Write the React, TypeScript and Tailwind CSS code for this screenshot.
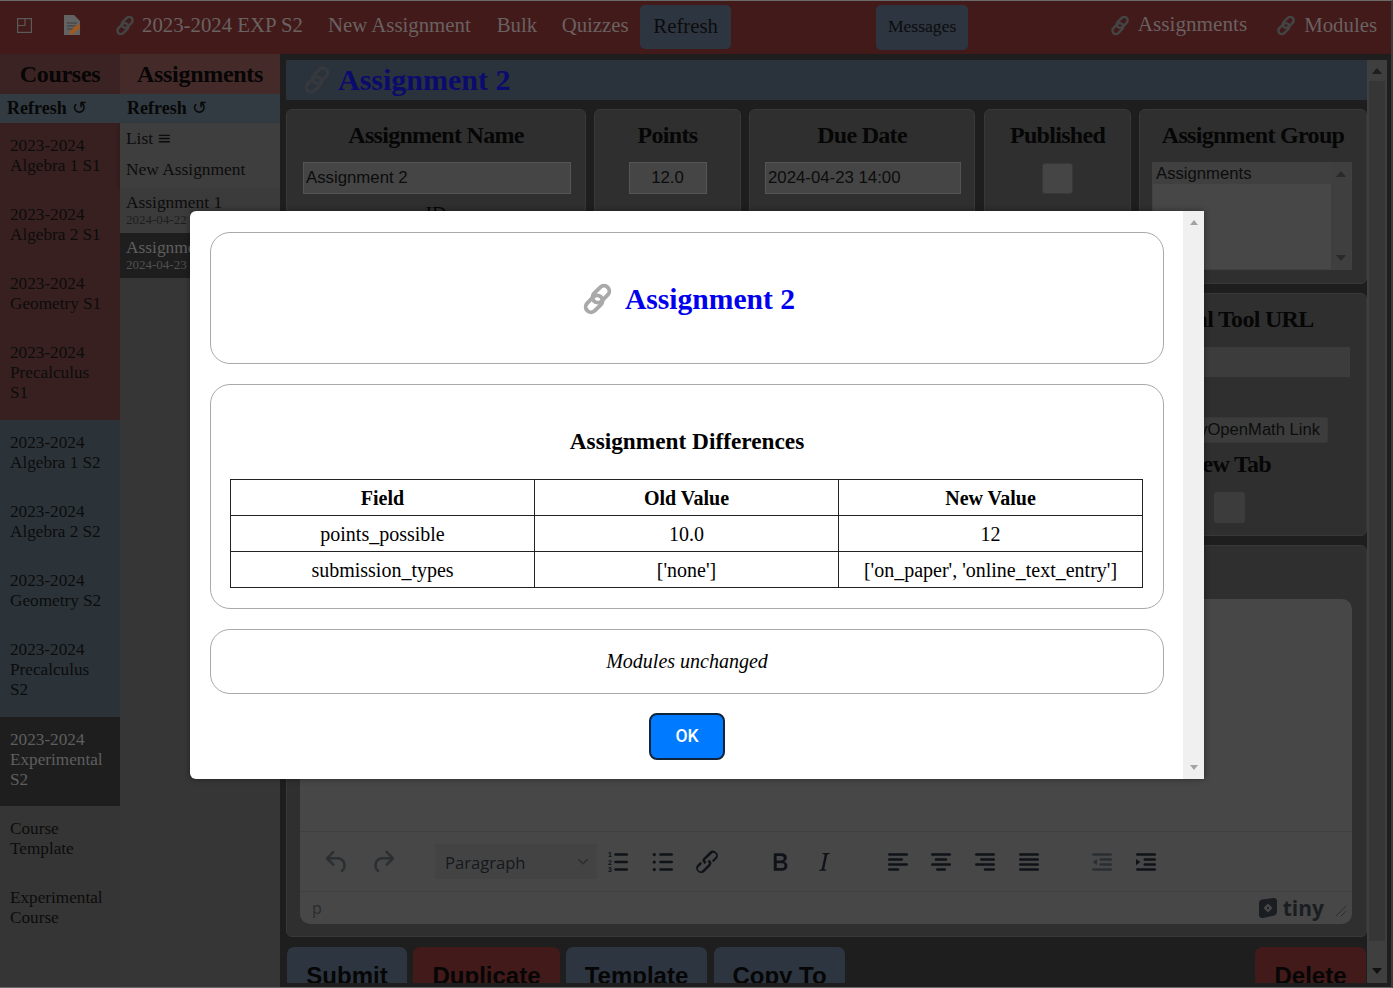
import React from "react";

type Course = { lines: string[]; tone: "red" | "blue" | "active" | "plain" };

const courses: Course[] = [
  { lines: ["2023-2024", "Algebra 1 S1"], tone: "red" },
  { lines: ["2023-2024", "Algebra 2 S1"], tone: "red" },
  { lines: ["2023-2024", "Geometry S1"], tone: "red" },
  { lines: ["2023-2024", "Precalculus", "S1"], tone: "red" },
  { lines: ["2023-2024", "Algebra 1 S2"], tone: "blue" },
  { lines: ["2023-2024", "Algebra 2 S2"], tone: "blue" },
  { lines: ["2023-2024", "Geometry S2"], tone: "blue" },
  { lines: ["2023-2024", "Precalculus", "S2"], tone: "blue" },
  { lines: ["2023-2024", "Experimental", "S2"], tone: "active" },
  { lines: ["Course", "Template"], tone: "plain" },
  { lines: ["Experimental", "Course"], tone: "plain" },
];

const toneClass = {
  red: "bg-[#382020] text-[#0c0c0c]",
  blue: "bg-[#2b3339] text-[#0c0c0c]",
  active: "bg-[#1e1e1e] text-[#5e5e5e]",
  plain: "bg-[#353535] text-[#0c0c0c]",
};

const ink = "h-[30px] w-[30px] shrink-0 text-[#0f1318]";
const faded = "h-[30px] w-[30px] shrink-0 text-[#2b2f32]";

function ChainIcon({ className }: { className?: string }) {
  return (
    <svg viewBox="0 0 32 32" fill="none" stroke="currentColor" strokeWidth="4" className={className}>
      <rect x="14" y="1" width="11" height="20" rx="5.5" transform="rotate(45 19.5 11)" />
      <rect x="7" y="11" width="11" height="20" rx="5.5" transform="rotate(45 12.5 21)" />
    </svg>
  );
}

function Lines({ rows, className }: { rows: [number, number][]; className: string }) {
  return (
    <svg viewBox="0 0 24 24" fill="currentColor" className={className}>
      {rows.map(([x, w], i) => (
        <rect key={i} x={x} y={5 + i * 4} width={w} height="2" rx="1" />
      ))}
    </svg>
  );
}

function IconPath({ d, className }: { d: string; className: string }) {
  return (
    <svg viewBox="0 0 24 24" fill="currentColor" className={className}>
      <path d={d} />
    </svg>
  );
}

function Arrow({ down, className }: { down?: boolean; className: string }) {
  return (
    <svg viewBox="0 0 10 6" fill="currentColor" className={className}>
      <path d={down ? "M0 0h10L5 6z" : "M5 0l5 6H0z"} />
    </svg>
  );
}

function CardTitle({ children }: { children: React.ReactNode }) {
  return (
    <h2 className="text-center text-[24px] font-bold leading-[28px] tracking-[-0.7px] text-[#060606]">{children}</h2>
  );
}

function Card({ className, children }: { className: string; children?: React.ReactNode }) {
  return <div className={`rounded-[6px] border border-[#383838] bg-[#2f2f2f] ${className}`}>{children}</div>;
}

function FormInput({ className, children }: { className: string; children?: React.ReactNode }) {
  return (
    <div
      className={`flex h-[32px] items-center border border-[#555555] bg-[#454545] px-[2px] text-[16.8px] text-[#0c0c0c] [font-family:'Liberation_Sans',sans-serif] ${className}`}
    >
      {children}
    </div>
  );
}

function Header() {
  return (
    <header className="flex h-[53px] shrink-0 items-center bg-[#421a1a] pb-[5px] pr-[14px] text-[20.8px] text-[#6a6161]">
      <svg viewBox="0 0 15 15" fill="none" stroke="#5a5a5a" strokeWidth="1.2" className="ml-[17px] h-[15px] w-[15px]">
        <rect x="0.6" y="0.6" width="13.8" height="13.8" />
        <path d="M8 0.6V7.500H0.600" />
      </svg>
      <svg viewBox="0 0 18 20" className="ml-[32px] h-[20px] w-[18px]">
        <path d="M0 0h10l6 6v14H0z" fill="#636363" />
        <path d="M3 8h10M3 11h10M3 14h6" stroke="#3d3d3d" strokeWidth="1" />
        <path d="M5 20l1.500-4 7-7 3 3-7 6.500z" fill="#a5581d" />
      </svg>
      <ChainIcon className="ml-[33px] h-[21px] w-[20px] text-[#444444]" />
      <span className="ml-[7px]">2023-2024 EXP S2</span>
      <span className="ml-[25px]">New Assignment</span>
      <span className="ml-[26px]">Bulk</span>
      <span className="ml-[24.500px]">Quizzes</span>
      <div className="ml-[11.500px] mt-[4px] flex h-[44px] w-[91px] items-center justify-center rounded-[5px] bg-[#2d3540] pb-[2px] text-[#0c0c0c]">
        Refresh
      </div>
      <div className="ml-[145px] mt-[5px] flex h-[45px] w-[92px] items-center justify-center rounded-[5px] bg-[#2d3540] pb-[3px] text-[17.6px] text-[#0c0c0c]">
        Messages
      </div>
      <ChainIcon className="ml-auto h-[21px] w-[20px] text-[#444444]" />
      <span className="ml-[8px] text-[21.2px]">Assignments</span>
      <ChainIcon className="ml-[29px] h-[21px] w-[20px] text-[#444444]" />
      <span className="ml-[8px]">Modules</span>
    </header>
  );
}

function RefreshBar() {
  return (
    <div className="flex h-[29px] items-center bg-[#323b42] pl-[7px] text-[18px] font-bold text-[#080808]">
      Refresh <span className="ml-[5px] font-normal">↺</span>
    </div>
  );
}

function CoursesColumn() {
  return (
    <div className="flex w-[120px] shrink-0 flex-col bg-[#353535]">
      <div className="flex h-[40px] items-center justify-center bg-[#3c2323] text-[24px] font-bold tracking-[-0.3px] text-[#060606]">
        Courses
      </div>
      <RefreshBar />
      {courses.map((c) => (
        <div
          key={c.lines.join(" ")}
          className={`pl-[10px] pt-[12.5px] text-[17.2px] leading-[20px] ${c.lines.length === 3 ? "h-[89.25px]" : "h-[69.25px]"} ${toneClass[c.tone]}`}
        >
          {c.lines.map((line) => (
            <div key={line}>{line}</div>
          ))}
        </div>
      ))}
    </div>
  );
}

function AssignmentsColumn() {
  return (
    <div className="flex w-[160px] shrink-0 flex-col bg-[#363636]">
      <div className="flex h-[40px] items-center justify-center bg-[#452a2a] text-[24px] font-bold tracking-[-0.3px] text-[#060606]">
        Assignments
      </div>
      <RefreshBar />
      <div className="h-[65px] bg-[#3e3e3e] pl-[6px] text-[17.4px] text-[#0c0c0c] shadow-[0_2px_4px_rgba(0,0,0,0.3)]">
        <div className="flex h-[25px] items-end leading-[20px]">
          List <span className="ml-[4px] [font-family:'DejaVu_Sans',sans-serif]">≡</span>
        </div>
        <div className="mt-[11px] leading-[20px]">New Assignment</div>
      </div>
      <div className="h-[45px] bg-[#3b3b3b] pl-[6px] pt-[4px] text-[#0c0c0c]">
        <div className="text-[17.4px] leading-[20px]">Assignment 1</div>
        <div className="mt-[1px] text-[13px] leading-[14px] text-[#1e1e1e]">2024-04-22</div>
      </div>
      <div className="h-[45px] bg-[#1e1e1e] pl-[6px] pt-[4px] text-[#5e5e5e]">
        <div className="text-[17.4px] leading-[20px]">Assignment 2</div>
        <div className="mt-[1px] text-[13px] leading-[14px] text-[#505050]">2024-04-23</div>
      </div>
    </div>
  );
}

function Editor() {
  return (
    <div className="ml-[13px] mr-[14px] mt-[12px] flex h-[325px] flex-col rounded-[10px] bg-[#474747]">
      <div className="flex-1 border-b border-[#404040]" />
      <div className="flex h-[60px] items-center border-b border-[#404040] pl-[22px]">
        <IconPath
          className={faded}
          d="M6.4 8H12c3.7 0 6.2 2 6.8 5.1.6 2.7-.4 5.6-2.3 6.8a1 1 0 0 1-1-1.8c1.1-.6 1.8-2.7 1.4-4.6-.5-2.1-2.1-3.5-4.9-3.5H6.4l3.3 3.3a1 1 0 1 1-1.4 1.4l-5-5a1 1 0 0 1 0-1.4l5-5a1 1 0 0 1 1.4 1.4L6.4 8Z"
        />
        <IconPath
          className={`ml-[16px] ${faded}`}
          d="M17.6 10H12c-2.8 0-4.4 1.4-4.9 3.5-.4 2 .3 4 1.4 4.6a1 1 0 1 1-1 1.8c-2-1.2-2.9-4.1-2.3-6.8.6-3 3-5.1 6.8-5.1h5.6l-3.3-3.3a1 1 0 1 1 1.4-1.4l5 5a1 1 0 0 1 0 1.4l-5 5a1 1 0 0 1-1.4-1.4l3.3-3.3Z"
        />
        <div className="ml-[37px] flex h-[35px] w-[162px] shrink-0 items-center justify-between rounded-[3px] bg-[#434343] pl-[10px] pr-[8px] pt-[3px] text-[16.6px] text-[#14181c] [font-family:'Open_Sans',sans-serif]">
          Paragraph
          <svg viewBox="0 0 10 6" fill="none" stroke="#2b2f32" strokeWidth="1.2" className="mb-[3px] h-[7px] w-[12px]">
            <path d="M1 1l4 4 4-4" />
          </svg>
        </div>
        <svg viewBox="0 0 24 24" className={`ml-[6px] ${ink}`} fill="currentColor">
          <rect x="9" y="5" width="11" height="2" rx="1" />
          <rect x="9" y="11" width="11" height="2" rx="1" />
          <rect x="9" y="17" width="11" height="2" rx="1" />
          <text x="4" y="8" fontSize="5.500" fontFamily="Liberation Sans" fontWeight="700">1</text>
          <text x="4" y="14" fontSize="5.500" fontFamily="Liberation Sans" fontWeight="700">2</text>
          <text x="4" y="20" fontSize="5.500" fontFamily="Liberation Sans" fontWeight="700">3</text>
        </svg>
        <svg viewBox="0 0 24 24" className={`ml-[15px] ${ink}`} fill="currentColor">
          <rect x="9" y="5" width="11" height="2" rx="1" />
          <rect x="9" y="11" width="11" height="2" rx="1" />
          <rect x="9" y="17" width="11" height="2" rx="1" />
          <circle cx="5" cy="6" r="1.3" />
          <circle cx="5" cy="12" r="1.3" />
          <circle cx="5" cy="18" r="1.3" />
        </svg>
        <IconPath
          className={`ml-[14px] ${ink}`}
          d="M6.200 12.300a1 1 0 0 1 1.400 1.400l-2 2a2 2 0 1 0 2.800 2.800l4.800-4.800a1 1 0 0 0 0-1.400 1 1 0 1 1 1.400-1.300 2.900 2.900 0 0 1 0 4.100l-4.800 4.800a4 4 0 0 1-5.600-5.600l2-2Zm11.600-.6a1 1 0 0 1-1.400-1.400l2-2a2 2 0 1 0-2.800-2.800L10.800 10a1 1 0 0 0 0 1.400 1 1 0 1 1-1.400 1.300 2.900 2.900 0 0 1 0-4.100l4.800-4.800a4 4 0 0 1 5.600 5.600l-2 2Z"
        />
        <IconPath
          className={`ml-[43px] ${ink}`}
          d="M7.800 19c-.3 0-.5 0-.6-.2l-.2-.5V5.700c0-.2 0-.4.2-.5l.6-.2h5c1.500 0 2.700.3 3.500 1 .7.6 1.100 1.400 1.100 2.500a3 3 0 0 1-.6 1.900c-.4.6-1 1-1.600 1.200.4.1.9.3 1.300.6s.8.7 1 1.200c.3.4.4 1 .4 1.600 0 1.300-.4 2.300-1.300 3-.8.7-2.100 1-3.800 1H7.800Zm5-8.300c.6 0 1.200-.1 1.600-.5.4-.3.6-.7.6-1.300 0-1.100-.8-1.700-2.300-1.700H9.300v3.500h3.400Zm.5 6c.7 0 1.300-.1 1.700-.4.4-.4.6-.9.6-1.500s-.2-1-.7-1.400c-.4-.3-1-.4-2-.4H9.400v3.800h4Z"
        />
        <IconPath
          className={`ml-[14px] ${ink}`}
          d="m16.700 4.700-.1.9h-.3c-.6 0-1 0-1.400.3-.3.3-.4.6-.5 1.100l-2.100 9.800v.6c0 .5.4.8 1.400.8h.2l-.2.8H8l.2-.8h.2c1.100 0 1.800-.5 2-1.500l2-9.800.1-.5c0-.6-.4-.8-1.400-.8h-.3l.2-.9h5.800Z"
        />
        <Lines className={`ml-[44px] ${ink}`} rows={[[4, 16], [4, 12], [4, 16], [4, 9]]} />
        <Lines className={`ml-[13px] ${ink}`} rows={[[4, 16], [7, 10], [4, 16], [8, 8]]} />
        <Lines className={`ml-[14px] ${ink}`} rows={[[4, 16], [8, 12], [4, 16], [11, 9]]} />
        <Lines className={`ml-[14px] ${ink}`} rows={[[4, 16], [4, 16], [4, 16], [4, 16]]} />
        <svg viewBox="0 0 24 24" className={`ml-[43px] ${faded}`} fill="currentColor">
          <rect x="4" y="5" width="16" height="2" rx="1" />
          <rect x="10" y="9" width="10" height="2" rx="1" />
          <rect x="10" y="13" width="10" height="2" rx="1" />
          <rect x="4" y="17" width="16" height="2" rx="1" />
          <path d="M8 9.500v5L4.500 12z" />
        </svg>
        <svg viewBox="0 0 24 24" className={`ml-[14px] ${ink}`} fill="currentColor">
          <rect x="4" y="5" width="16" height="2" rx="1" />
          <rect x="10" y="9" width="10" height="2" rx="1" />
          <rect x="10" y="13" width="10" height="2" rx="1" />
          <rect x="4" y="17" width="16" height="2" rx="1" />
          <path d="M4 9.500v5l3.500-2.500z" />
        </svg>
      </div>
      <div className="flex h-[32px] items-center justify-between pl-[12px] pr-[5px] text-[#282c30] [font-family:'Open_Sans',sans-serif]">
        <span className="text-[16px]">p</span>
        <div className="flex items-center">
          <svg viewBox="0 0 20 20" className="h-[20px] w-[20px]">
            <path d="M4 1.500 15 0q4-.5 4 3v11q0 2.500-2.500 3.500L5 20q-4 .5-4-3V5q0-2.500 3-3.500Z" fill="#1a1e22" />
            <path d="M10 5.500l4.500 4.500-4.500 4.500L5.500 10z" fill="#474747" />
            <rect x="9" y="9" width="2" height="2" fill="#1a1e22" />
          </svg>
          <span className="ml-[5px] text-[21px] font-bold leading-none text-[#1a1e22]">tiny</span>
          <svg viewBox="0 0 12 12" stroke="#2b2f32" strokeWidth="1" className="ml-[11px] mt-[6px] h-[12px] w-[12px]">
            <path d="M1 11L11 1M6 11l5-5" />
          </svg>
        </div>
      </div>
    </div>
  );
}

function MainPanel() {
  return (
    <main className="flex min-w-0 flex-1 overflow-hidden bg-[#1e1e1e] pl-[6px]">
      <div className="flex h-[929px] w-[1081px] shrink-0 flex-col overflow-hidden text-[#060606]">
        <div className="mt-[6px] flex h-[40px] shrink-0 items-center bg-[#2a323c] pl-[17px]">
          <ChainIcon className="h-[30px] w-[28px] text-[#35383c]" />
          <span className="ml-[7px] pb-[2px] text-[30px] font-bold text-[#0b0b6e]">Assignment 2</span>
        </div>

        <div className="mt-[9px] flex h-[175px] shrink-0 gap-[8px]">
          <Card className="w-[300px] pt-[11px]">
            <CardTitle>Assignment Name</CardTitle>
            <FormInput className="ml-[16px] mr-[14px] mt-[13px]">Assignment 2</FormInput>
            <p className="mt-[8px] text-center text-[20px] leading-[24px]">ID</p>
          </Card>
          <Card className="w-[147px] pt-[11px]">
            <CardTitle>Points</CardTitle>
            <FormInput className="mx-[33.500px] mt-[13px] justify-center">12.0</FormInput>
          </Card>
          <Card className="w-[226px] pt-[11px]">
            <CardTitle>Due Date</CardTitle>
            <FormInput className="ml-[15px] mr-[13px] mt-[13px]">2024-04-23 14:00</FormInput>
          </Card>
          <Card className="ml-[1px] w-[147px] pt-[11px]">
            <CardTitle>Published</CardTitle>
            <div className="mx-auto mt-[14px] h-[31px] w-[31px] rounded-[3px] border border-[#383838] bg-[#454545]" />
          </Card>
          <Card className="w-[228px] pt-[11px]">
            <CardTitle>Assignment Group</CardTitle>
            <div className="ml-[12px] mr-[14px] mt-[13px] flex h-[108px] border border-[#404040] bg-[#474747] text-[16.7px] text-[#0c0c0c] [font-family:'Liberation_Sans',sans-serif]">
              <div className="flex-1">
                <div className="bg-[#404040] pl-[3px] leading-[21px]">Assignments</div>
              </div>
              <div className="flex w-[20px] flex-col items-center justify-between bg-[#3f3f3f] py-[8px]">
                <Arrow className="h-[6px] w-[10px] text-[#2a2a2a]" />
                <Arrow down className="h-[6px] w-[10px] text-[#2a2a2a]" />
              </div>
            </div>
          </Card>
        </div>

        <div className="mt-[9px] flex h-[243px] shrink-0 justify-end gap-[8px]">
          <Card className="flex-1" />
          <Card className="w-[291px] pt-[11px]">
            <CardTitle>External Tool URL</CardTitle>
            <div className="ml-[14px] mt-[14px] h-[30px] w-[259px] bg-[#3c3c3c]" />
            <div className="mt-[40px] flex justify-end pr-[38px]">
              <div className="flex h-[26px] items-center rounded-[2px] border border-[#383838] bg-[#3c3c3c] px-[7px] text-[16.6px] text-[#0c0c0c] [font-family:'Liberation_Sans',sans-serif]">
                Open MyOpenMath Link
              </div>
            </div>
            <div className="mt-[7px] flex justify-end pr-[95px]">
              <CardTitle>Open in New Tab</CardTitle>
            </div>
            <div className="ml-[137px] mt-[14px] h-[31px] w-[31px] rounded-[3px] bg-[#3c3c3c]" />
          </Card>
        </div>

        <Card className="mt-[9px] h-[392px] shrink-0 pt-[13px]">
          <CardTitle>Description</CardTitle>
          <Editor />
        </Card>

        <div className="mt-[10px] flex shrink-0 text-[24px] font-bold text-[#060606] [font-family:'Liberation_Sans',sans-serif]">
          <div className="ml-[1px] h-[60px] w-[120px] rounded-t-[7px] bg-[#2d3540] pt-[11px] text-center">Submit</div>
          <div className="ml-[6px] h-[60px] w-[147px] rounded-t-[7px] bg-[#421a1a] pt-[11px] text-center">Duplicate</div>
          <div className="ml-[6px] h-[60px] w-[141px] rounded-t-[7px] bg-[#2d3540] pt-[11px] text-center">Template</div>
          <div className="ml-[7px] h-[60px] w-[131px] rounded-t-[7px] bg-[#2d3540] pt-[11px] text-center">Copy To</div>
          <div className="ml-auto mr-[1px] h-[60px] w-[111px] rounded-t-[7px] bg-[#421a1a] pt-[11px] text-center">Delete</div>
        </div>
      </div>

      <div className="mt-[6px] flex h-[923px] w-[20px] shrink-0 flex-col bg-[#3f3f3f]">
        <div className="flex h-[21px] items-center justify-center">
          <Arrow className="h-[6px] w-[10px] text-[#1e1e1e]" />
        </div>
        <div className="mx-[2px] h-[860px] bg-[#363636]" />
        <div className="flex flex-1 items-end justify-center pb-[9px]">
          <Arrow down className="h-[6px] w-[10px] text-[#111111]" />
        </div>
      </div>
    </main>
  );
}

function Panel({ className, children }: { className: string; children: React.ReactNode }) {
  return <section className={`rounded-[20px] border border-[#a9a9a9] ${className}`}>{children}</section>;
}

function ResultModal() {
  const rows = [
    ["points_possible", "10.0", "12"],
    ["submission_types", "['none']", "['on_paper', 'online_text_entry']"],
  ];
  return (
    <div className="absolute left-[190px] top-[210px] flex h-[568px] w-[1014px] rounded-l-[6px] bg-white shadow-[0_0_6px_rgba(0,0,0,0.4)]">
      <div className="flex flex-1 flex-col items-stretch pl-[20px] pr-[19px] pt-[21px]">
        <Panel className="flex h-[132px] items-center justify-center pl-[3px] pt-[2px]">
          <ChainIcon className="h-[32px] w-[31px] text-[#a9a9a9]" />
          <span className="ml-[12px] text-[29.600px] font-bold text-[#0000ee]">Assignment 2</span>
        </Panel>
        <Panel className="mt-[20px] h-[225px] px-[19px] pt-[41px]">
          <h3 className="text-center text-[23.300px] font-bold leading-[30px] text-black">Assignment Differences</h3>
          <table className="mt-[23px] w-[913px] table-fixed border-collapse text-center text-[20px] text-black">
            <thead>
              <tr className="h-[36px]">
                <th className="border border-[#222222] font-bold">Field</th>
                <th className="border border-[#222222] font-bold">Old Value</th>
                <th className="border border-[#222222] font-bold">New Value</th>
              </tr>
            </thead>
            <tbody>
              {rows.map((row) => (
                <tr key={row[0]} className="h-[36px]">
                  {row.map((cell) => (
                    <td key={cell} className="border border-[#222222]">
                      {cell}
                    </td>
                  ))}
                </tr>
              ))}
            </tbody>
          </table>
        </Panel>
        <Panel className="mt-[20px] flex h-[65px] items-center justify-center pb-[2px] text-[20px] italic text-black">
          Modules unchanged
        </Panel>
        <button className="mx-auto mt-[19px] h-[47px] w-[76px] rounded-[8px] border-2 border-[#10243a] bg-[#007bff] text-[17.6px] font-medium text-white [font-family:'Roboto',sans-serif]">
          OK
        </button>
      </div>
      <div className="flex w-[21px] flex-col items-center justify-between bg-[#f0f0f0] py-[9px]">
        <Arrow className="h-[5px] w-[8px] text-[#a3a3a3]" />
        <Arrow down className="h-[5px] w-[8px] text-[#a3a3a3]" />
      </div>
    </div>
  );
}

export default function App() {
  return (
    <div className="relative flex h-[988px] w-full flex-col overflow-hidden border-y border-r-2 border-y-[#6a6a6a] border-r-[#3c3c3c] bg-[#1e1e1e] text-[#111111] [font-family:'Liberation_Serif',serif]">
      <Header />
      <div className="flex min-h-0 flex-1">
        <CoursesColumn />
        <AssignmentsColumn />
        <MainPanel />
      </div>
      <ResultModal />
    </div>
  );
}
